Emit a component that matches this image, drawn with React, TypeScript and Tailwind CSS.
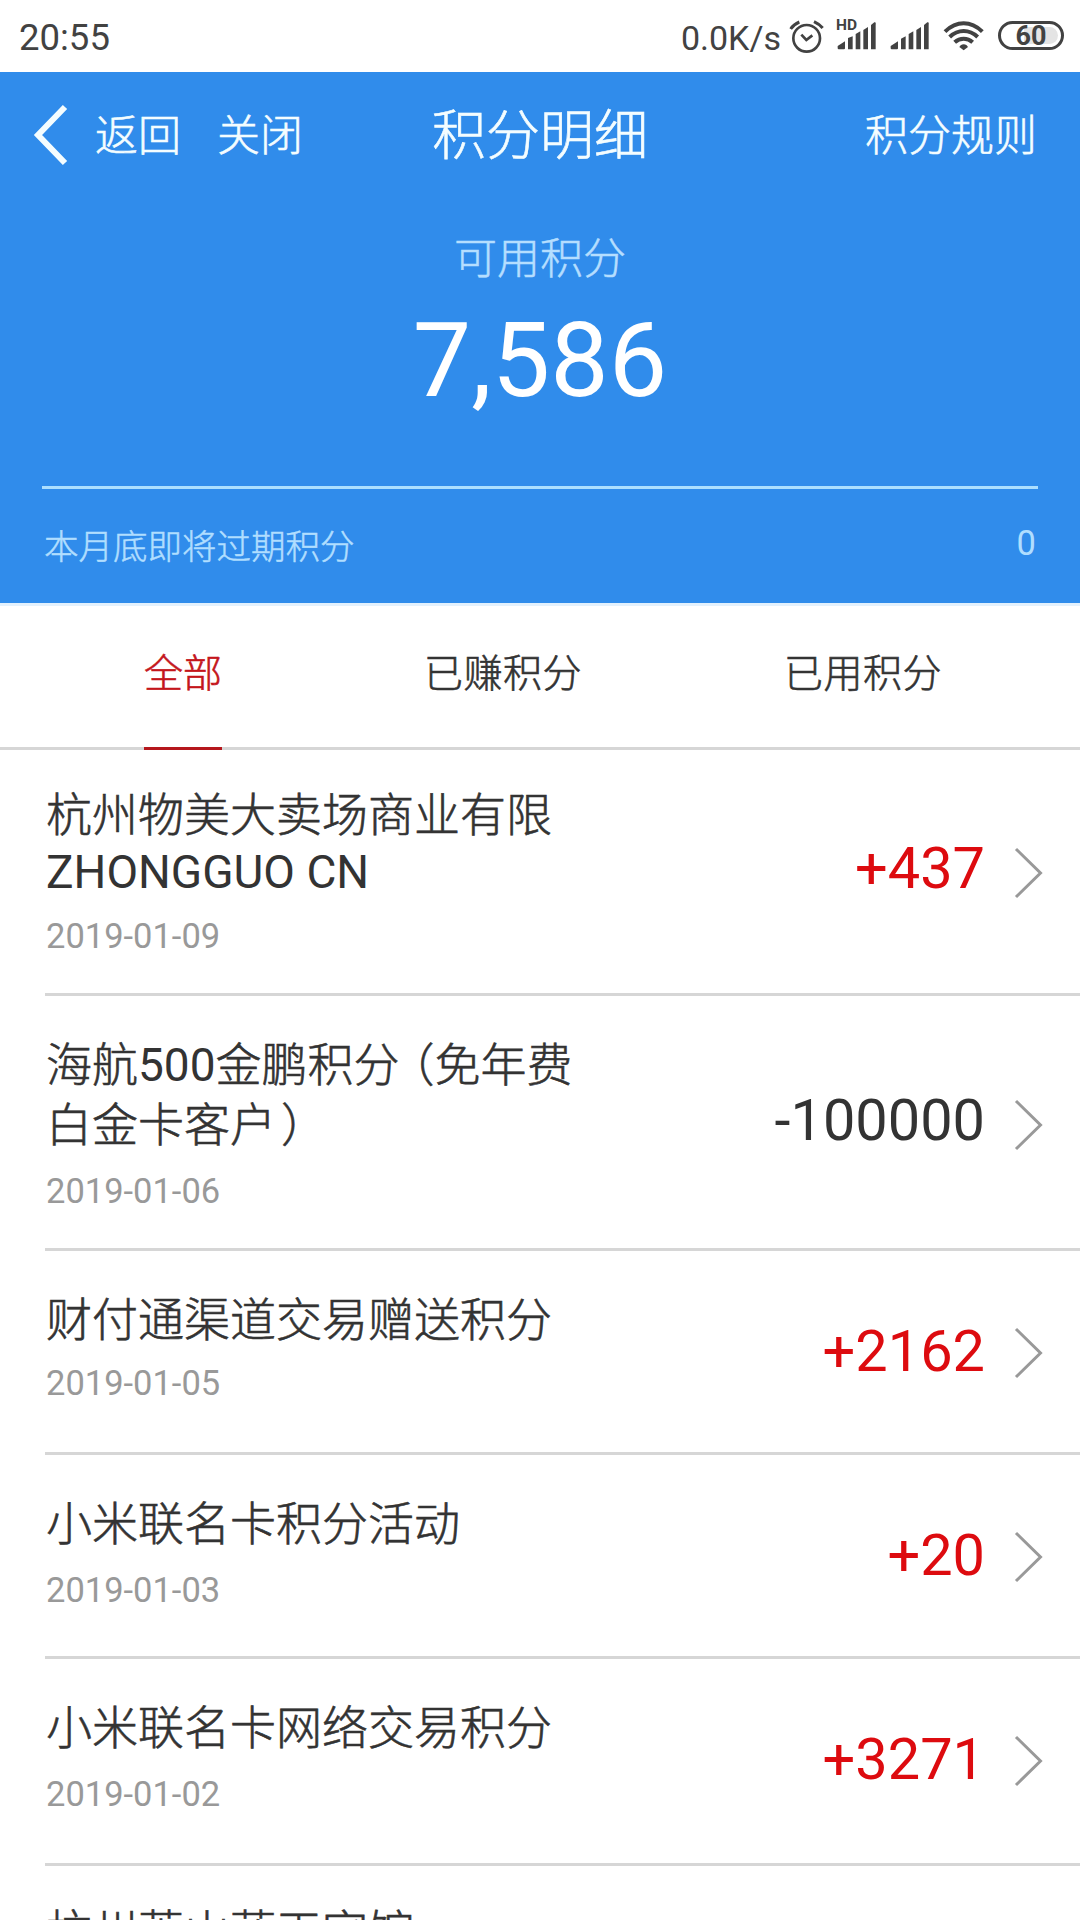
import React from "react";
import clsx from "clsx";

type PointItem = {
  id: number;
  title: string[];
  date: string;
  amount: string;
  rowClass: string;
  lineClass: string;
  dateClass: string;
  amountClass: string;
  arrowClass: string;
};

const items: PointItem[] = [
  {
    id: 1,
    title: ["杭州物美大卖场商业有限", "ZHONGGUO CN"],
    date: "2019-01-09",
    amount: "+437",
    rowClass: "h-[246px] pt-[37px]",
    lineClass: "leading-[57px]",
    dateClass: "mt-[15px]",
    amountClass: "mb-[5px]",
    arrowClass: "mt-[5px]",
  },
  {
    id: 2,
    title: ["海航500金鹏积分（免年费", "白金卡客户）"],
    date: "2019-01-06",
    amount: "-100000",
    rowClass: "h-[255px] pt-[39px]",
    lineClass: "leading-[60px]",
    dateClass: "mt-[16px]",
    amountClass: "mb-[4px]",
    arrowClass: "mt-[6px]",
  },
  {
    id: 3,
    title: ["财付通渠道交易赠送积分"],
    date: "2019-01-05",
    amount: "+2162",
    rowClass: "h-[204px] pt-[39px]",
    lineClass: "leading-[60px]",
    dateClass: "mt-[13px]",
    amountClass: "mb-[1px]",
    arrowClass: "mt-[3px]",
  },
  {
    id: 4,
    title: ["小米联名卡积分活动"],
    date: "2019-01-03",
    amount: "+20",
    rowClass: "h-[204px] pt-[39px]",
    lineClass: "leading-[60px]",
    dateClass: "mt-[16px]",
    amountClass: "mb-[1px]",
    arrowClass: "mt-[3px]",
  },
  {
    id: 5,
    title: ["小米联名卡网络交易积分"],
    date: "2019-01-02",
    amount: "+3271",
    rowClass: "h-[207px] pt-[39px]",
    lineClass: "leading-[60px]",
    dateClass: "mt-[16px]",
    amountClass: "mb-[4px]",
    arrowClass: "",
  },
];

// first line of the next record, peeking in at the bottom of the screen
const nextTitle = "杭州萧山蓝天宾馆";

function SignalBars({ tall }: { tall?: boolean }) {
  return (
    <svg className="w-[41px] h-[72px]" viewBox="0 0 123 216" fill="#424242">
      <path d="M5 145v-7l22-14v21a3 3 0 0 1-3 3H8a3 3 0 0 1-3-3Z" />
      <path d={tall ? "M36 148v-34l14-5v39Z" : "M36 148v-32l14-7v39Z"} />
      <path d="M59 148v-46l14-8v54Z" />
      <path d="M82 148V90l14-9v67Z" />
      <path d="M105 148V75l10-8q4-2 4 3v78Z" />
    </svg>
  );
}

function StatusBar() {
  return (
    <div className="shrink-0 flex items-center justify-between h-[72px] pl-[19px] pr-[15px] text-[#424242]">
      <span className="text-[36.5px] leading-[48px] pt-[4px]">20:55</span>
      <div className="flex items-center gap-3">
        <span className="text-[34px] leading-[48px] pt-[3px] -mr-[4px]">0.0K/s</span>
        <svg
          className="w-[35px] h-[72px]"
          viewBox="0 0 105 216"
          fill="none"
          stroke="#424242"
          strokeWidth="8"
        >
          <circle cx="53" cy="115" r="40" />
          <path d="M37 104l15 16 18-14" />
          <path d="M5 87Q14 73 31 66M101 84Q92 73 75 65" strokeWidth="9" />
        </svg>
        <div className="relative">
          <SignalBars tall />
          <span className="absolute left-0 top-[19px] bg-white pr-px text-[15.5px] leading-[13px] font-bold">
            HD
          </span>
        </div>
        <SignalBars />
        <svg
          className="w-[43px] h-[72px]"
          viewBox="0 0 129 216"
          fill="none"
          stroke="#424242"
          strokeWidth="12"
        >
          <path d="M9 95Q35 70 65 70T121 95" />
          <path d="M23 111Q42 93 65 93T107 111" />
          <path d="M38 127Q50 116 65 116T92 127" />
          <path d="M52 141l4-5q9-6 18 0l4 5-13 10Z" fill="#424242" stroke="none" />
        </svg>
        <div className="relative w-[66px] h-[29px] ml-px mr-px mb-[1px] p-[3px] rounded-full border-[3px] border-[#424242] flex justify-end">
          <span className="w-[34px] h-full rounded-r-full bg-[#e4e4e4]" />
          <span className="absolute inset-0 pt-[2px] flex items-center justify-center text-[27px] leading-none font-bold">
            60
          </span>
        </div>
      </div>
    </div>
  );
}

function Header() {
  return (
    <div className="shrink-0 h-[534px] bg-[#308ceb] border-b-[3px] border-[#e3f1fd]">
      <div className="relative flex items-center justify-between h-[126px] pl-[33px] pr-[43px] text-[43px] leading-[60px] text-[#f4fdff] font-light [-webkit-text-stroke:0.6px]">
        <div className="flex items-center">
          <svg className="w-[36px] h-[62px]" viewBox="0 0 36 62" fill="none">
            <path d="M32 3L5 31l27 28" stroke="#f4fdff" strokeWidth="6" />
          </svg>
          <span className="ml-[26px] pt-[2px]">返回</span>
          <span className="ml-[36px] pt-[2px]">关闭</span>
        </div>
        <h1 className="absolute inset-x-0 pt-[3px] text-center text-[54px] font-light">积分明细</h1>
        <span className="pt-[2px]">积分规则</span>
      </div>

      <div className="flex flex-col items-center pt-[31px]">
        <p className="text-[43px] leading-[60px] text-[#b5deff] font-light [-webkit-text-stroke:0.5px]">
          可用积分
        </p>
        <p className="mt-[12px] text-[104px] leading-[120px] text-white">7,586</p>
      </div>

      <div className="mx-[42px] mt-[65px] border-t-[3px] border-[#abdfff] flex justify-between px-[2px] pt-[32px] text-[34.5px] leading-[48px] text-[#b0deff]">
        <span className="pt-[2px] font-light [-webkit-text-stroke:0.5px]">本月底即将过期积分</span>
        <span className="-mt-[2px]">0</span>
      </div>
    </div>
  );
}

function Tabs() {
  return (
    <div className="shrink-0 flex justify-between h-[144px] pl-[144px] pr-[138px] border-b-[3px] border-[#d6d6d6] text-[39px] text-[#333] leading-[60px] font-light [-webkit-text-stroke:0.6px]">
      <span className="h-[144px] pt-[38px] text-[#c4151b] border-b-[3px] border-[#b5171c]">全部</span>
      <span className="pt-[38px] tracking-[0.5px]">已赚积分</span>
      <span className="pt-[38px] tracking-[0.5px]">已用积分</span>
    </div>
  );
}

// latin and digits stay regular, chinese is set lighter, brackets are half width
function TitleLine({ text }: { text: string }) {
  return (
    <>
      {text.split(/([A-Z0-9 ]+|[（）])/).map((part, i) => (
        <span
          key={i}
          className={clsx(
            /^[A-Z0-9 ]+$/.test(part)
              ? "font-normal"
              : "font-light [-webkit-text-stroke:0.6px]",
            part === "（" && "ml-3 [font-feature-settings:'halt']",
            part === "）" && "ml-[5px] [font-feature-settings:'halt']"
          )}
        >
          {part}
        </span>
      ))}
    </>
  );
}

function PointRow({ item }: { item: PointItem }) {
  return (
    <div
      className={clsx(
        "shrink-0 ml-[45px] pl-px pr-[37px] border-b-[3px] border-[#d6d6d6] flex justify-between",
        item.rowClass
      )}
    >
      <div>
        {item.title.map((line) => (
          <p key={line} className={clsx("text-[46px] text-[#333] whitespace-nowrap", item.lineClass)}>
            <TitleLine text={line} />
          </p>
        ))}
        <p className={clsx("text-[34.5px] leading-[40px] text-[#999]", item.dateClass)}>
          {item.date}
        </p>
      </div>
      <div className="-mt-10 flex items-center">
        <span
          className={clsx(
            "text-[57.7px] leading-[60px]",
            item.amount.startsWith("+") ? "text-[#dd0b0f]" : "text-[#333]",
            item.amountClass
          )}
        >
          {item.amount}
        </span>
        <svg
          className={clsx("ml-[29px] w-[29px] h-[52px]", item.arrowClass)}
          viewBox="0 0 29 52"
          fill="none"
        >
          <path d="M2 2l24.500 24L2 50" stroke="#999" strokeWidth="3" />
        </svg>
      </div>
    </div>
  );
}

export default function App() {
  return (
    <div className="w-[1080px] h-[1920px] overflow-hidden bg-white flex flex-col font-[Roboto,'Noto_Sans_CJK_SC',sans-serif]">
      <StatusBar />
      <Header />
      <Tabs />
      {items.map((item) => (
        <PointRow key={item.id} item={item} />
      ))}
      <p className="shrink-0 ml-[46px] pt-[38px] text-[46px] leading-[57px] text-[#333] font-light [-webkit-text-stroke:0.6px]">
        {nextTitle}
      </p>
    </div>
  );
}
